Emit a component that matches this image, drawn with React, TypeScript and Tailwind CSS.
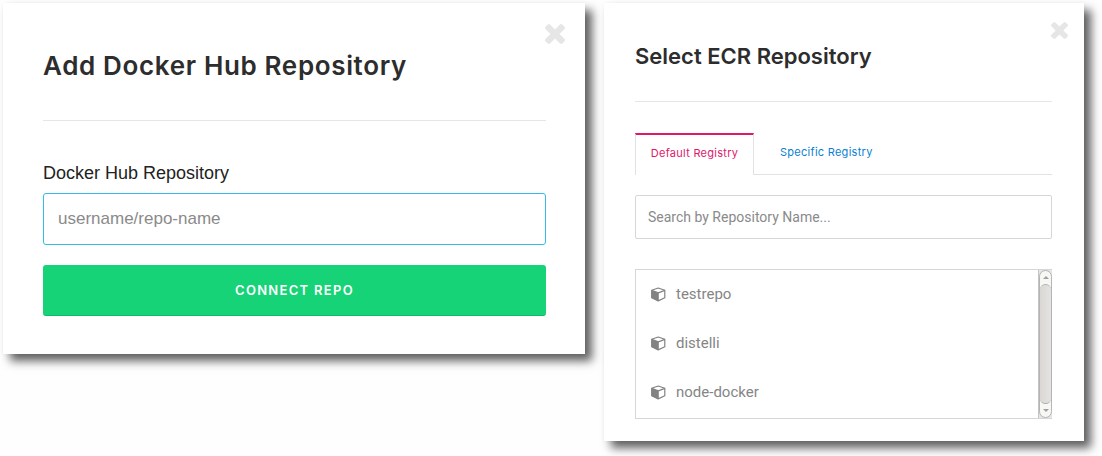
import React from "react";

const repositories = ["testrepo", "distelli", "node-docker"];

const panel =
  "relative bg-white shadow-[7px_7px_9px_rgba(0,0,0,0.62),0_0_4px_rgba(0,0,0,0.04)]";

function CloseIcon({ className }: { className: string }) {
  return (
    <svg viewBox="302 366 1188 1188" className={className} fill="currentColor" aria-hidden="true">
      <path d="M1490 1322q0 40-28 68l-136 136q-28 28-68 28t-68-28l-294-294-294 294q-28 28-68 28t-68-28l-136-136q-28-28-28-68t28-68l294-294-294-294q-28-28-28-68t28-68l136-136q28-28 68-28t68 28l294 294 294-294q28-28 68-28t68 28l136 136q28 28 28 68t-28 68l-294 294 294 294q28 28 28 68z" />
    </svg>
  );
}

function BoxIcon() {
  return (
    <svg viewBox="0 0 15 15" className="size-[15px] shrink-0 text-[#828282]" aria-hidden="true">
      <path
        d="M7.2 1 13.8 3.2V10.8L7.2 13.9 .7 10.8V3.2Z"
        fill="none"
        stroke="currentColor"
        strokeWidth="1.2"
        strokeLinejoin="round"
      />
      <path d="M.6 3.6 7.8 6V14L.6 11Z" fill="currentColor" />
      <path d="M.7 3.4 7.4 5.8 13.8 3.4" fill="none" stroke="currentColor" strokeWidth="1.2" />
    </svg>
  );
}

function ScrollBar() {
  return (
    <div className="flex w-[14px] shrink-0 flex-col border-l border-[#c4c4c4] bg-[#e6e5e3]" aria-hidden="true">
      <div className="flex min-h-0 flex-1 flex-col rounded-full border border-[#b4b4b2] bg-[#f7f7f6]">
        <div className="flex h-[13px] items-center justify-center">
          <svg viewBox="0 0 6 3" className="h-[3px] w-[6px]">
            <path d="M0 3 3 0 6 3Z" fill="#a0a09e" />
          </svg>
        </div>
        <div className="min-h-0 flex-1 rounded-full border-y border-[#b0afad] bg-linear-to-r from-[#d9d8d5] to-[#e4e3e1]" />
        <div className="flex h-[13px] items-center justify-center">
          <svg viewBox="0 0 6 3" className="h-[3px] w-[6px]">
            <path d="M0 0 3 3 6 0Z" fill="#a0a09e" />
          </svg>
        </div>
      </div>
    </div>
  );
}

function DockerHubPanel() {
  return (
    <section className={`${panel} pt-[45px] pr-[39px] pb-[38px] pl-10`}>
      <button type="button" aria-label="Close" className="absolute top-[21px] right-5 text-[#e6e6e6]">
        <CloseIcon className="size-5" />
      </button>
      <h2 className="font-['Inter',sans-serif] text-[26px] leading-9 font-semibold tracking-wide text-[#2d2d2d]">
        Add Docker Hub Repository
      </h2>
      <hr className="mt-9 border-[#e6e6e6]" />
      <form onSubmit={(e) => e.preventDefault()}>
        <label htmlFor="hub-repo" className="mt-10 block text-[18px] leading-6 text-[#222]">
          Docker Hub Repository
        </label>
        <input
          id="hub-repo"
          type="text"
          placeholder="username/repo-name"
          className="mt-2 block h-[52px] w-full rounded-[3px] border border-[#33bce7] px-[14px] text-[17px] text-[#333] outline-none placeholder:text-[#8a8a8a]"
        />
        <button
          type="submit"
          className="mt-5 block h-[51px] w-full rounded-[3px] border-b border-[#12b866] bg-[#16d377] pt-[2px] font-['Inter',sans-serif] text-[13px] font-semibold tracking-widest text-white"
        >
          CONNECT REPO
        </button>
      </form>
    </section>
  );
}

function EcrPanel() {
  return (
    <section className={`${panel} pt-9 pr-8 pb-[22px] pl-[31px] font-['Inter',sans-serif]`}>
      <button type="button" aria-label="Close" className="absolute top-[19px] right-4 text-[#e6e6e6]">
        <CloseIcon className="size-[17px]" />
      </button>
      <h2 className="text-[22px] leading-[34px] font-semibold text-[#2d2d2d]">Select ECR Repository</h2>
      <hr className="mt-7 border-[#e6e6e6]" />
      <div role="tablist" className="mt-[31px] flex h-[42px] text-[11px] tracking-wide">
        <button
          type="button"
          role="tab"
          aria-selected="true"
          className="w-[119px] border-x border-t-2 border-x-[#e2e2e2] border-t-[#e0176b] pb-1 text-[#e0176b]"
        >
          Default Registry
        </button>
        <div className="flex flex-1 border-b border-[#e2e2e2]">
          <button type="button" role="tab" aria-selected="false" className="px-[26px] pb-[2px] text-[#0a7fd3]">
            Specific Registry
          </button>
        </div>
      </div>
      <input
        type="search"
        aria-label="Search by Repository Name"
        placeholder="Search by Repository Name..."
        className="mt-5 block h-11 w-full rounded-[2px] border border-[#d6d6d6] px-3 font-['Roboto',sans-serif] text-[14px] text-[#333] outline-none placeholder:text-[#8a8a8a]"
      />
      <div className="mt-[30px] flex h-[150px] border border-r-0 border-[#d6d6d6]">
        <ul className="min-w-0 flex-1 overflow-hidden font-['Roboto',sans-serif] text-[15px] text-[#858585]">
          {repositories.map((name) => (
            <li key={name} className="flex h-[49px] items-center gap-[10px] px-[15px]">
              <BoxIcon />
              <span>{name}</span>
            </li>
          ))}
        </ul>
        <ScrollBar />
      </div>
    </section>
  );
}

export default function App() {
  return (
    <main className="grid min-h-screen grid-cols-[582fr_480fr] items-start gap-[19px] bg-[#fefefe] pt-[3px] pr-[18px] pb-[15px] pl-[3px] font-['Liberation_Sans',sans-serif]">
      <DockerHubPanel />
      <EcrPanel />
    </main>
  );
}
